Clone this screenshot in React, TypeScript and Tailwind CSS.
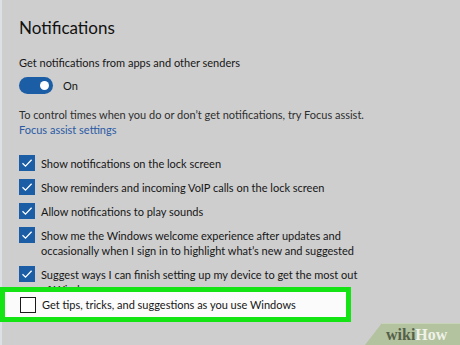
import React from "react";

const Check = ({ checked }: { checked: boolean }) =>
  checked ? (
    <div className="w-[16px] h-[16px] bg-[#1c5ea6] flex items-center justify-center shrink-0">
      <svg width="12" height="12" viewBox="0 0 12 12">
        <path d="M1.5 6.3 L4.5 9.2 L10.6 2.8" fill="none" stroke="#ffffff" strokeWidth="1.3" />
      </svg>
    </div>
  ) : (
    <div className="w-[16px] h-[16px] border-[1.5px] border-[#1a1a1a] bg-white shrink-0" />
  );

const Row = ({ checked, lines }: { checked: boolean; lines: string[] }) => (
  <div className="flex items-start gap-[6px]">
    <Check checked={checked} />
    <div className="leading-[15px] pt-[1px]">
      {lines.map((l, i) => (
        <div key={i} className="whitespace-nowrap">{l}</div>
      ))}
    </div>
  </div>
);

export default function App() {
  return (
    <div
      className="relative w-[460px] h-[345px] overflow-hidden bg-[#cecece] text-[#161616] text-[11px]"
      style={{ fontFamily: 'Lato, "Noto Sans", sans-serif' }}
    >
      <div className="absolute left-0 top-0 w-[2px] h-full bg-[#dde1e6]" />
      <div className="flex flex-col pl-[19px] pt-[14px]">
        <div className="text-[17px] leading-[28px] text-[#111]">Notifications</div>
        <div className="mt-[13px] leading-[15px]">Get notifications from apps and other senders</div>
        <div className="mt-[7px] flex items-center gap-[10px]">
          <div className="w-[34px] h-[17px] rounded-full bg-[#1c5ea6] flex items-center justify-end pr-[4px]">
            <div className="w-[9px] h-[9px] rounded-full bg-white" />
          </div>
          <span className="leading-[15px]">On</span>
        </div>
        <div className="mt-[13px] leading-[15px] text-[#2e2e2e]">
          To control times when you do or don’t get notifications, try Focus assist.
        </div>
        <div className="leading-[15px] text-[#2a5aa5]">Focus assist settings</div>
        <div className="mt-[18px] flex flex-col gap-[8px]">
          <Row checked lines={["Show notifications on the lock screen"]} />
          <Row checked lines={["Show reminders and incoming VoIP calls on the lock screen"]} />
          <Row checked lines={["Allow notifications to play sounds"]} />
          <Row
            checked
            lines={[
              "Show me the Windows welcome experience after updates and",
              "occasionally when I sign in to highlight what’s new and suggested",
            ]}
          />
          <Row
            checked
            lines={["Suggest ways I can finish setting up my device to get the most out", "of Windows"]}
          />
        </div>
      </div>
      <div className="relative z-10 mt-[-10px] w-[351px] h-[35px] border-[5px] border-[#14e414] bg-[#fbfbfb] flex items-center pl-[15px] gap-[6px]">
        <Check checked={false} />
        <span className="leading-[15px] whitespace-nowrap">Get tips, tricks, and suggestions as you use Windows</span>
      </div>
      <div className="absolute right-0 bottom-0 w-[95px] h-[22px]">
        <svg width="95" height="22" className="absolute inset-0">
          <polygon points="17,0 95,0 95,22 0,22" fill="#b3c29f" />
          <line x1="17" y1="0.5" x2="95" y2="0.5" stroke="#c8d4b8" strokeWidth="1" />
        </svg>
        <div
          className="absolute left-[21px] top-[3px] text-[16px] font-bold leading-[18px]"
          style={{ fontFamily: '"Liberation Serif", serif' }}
        >
          <span className="text-[#556048]">wiki</span>
          <span className="text-[#eef2e8]">How</span>
        </div>
      </div>
    </div>
  );
}
